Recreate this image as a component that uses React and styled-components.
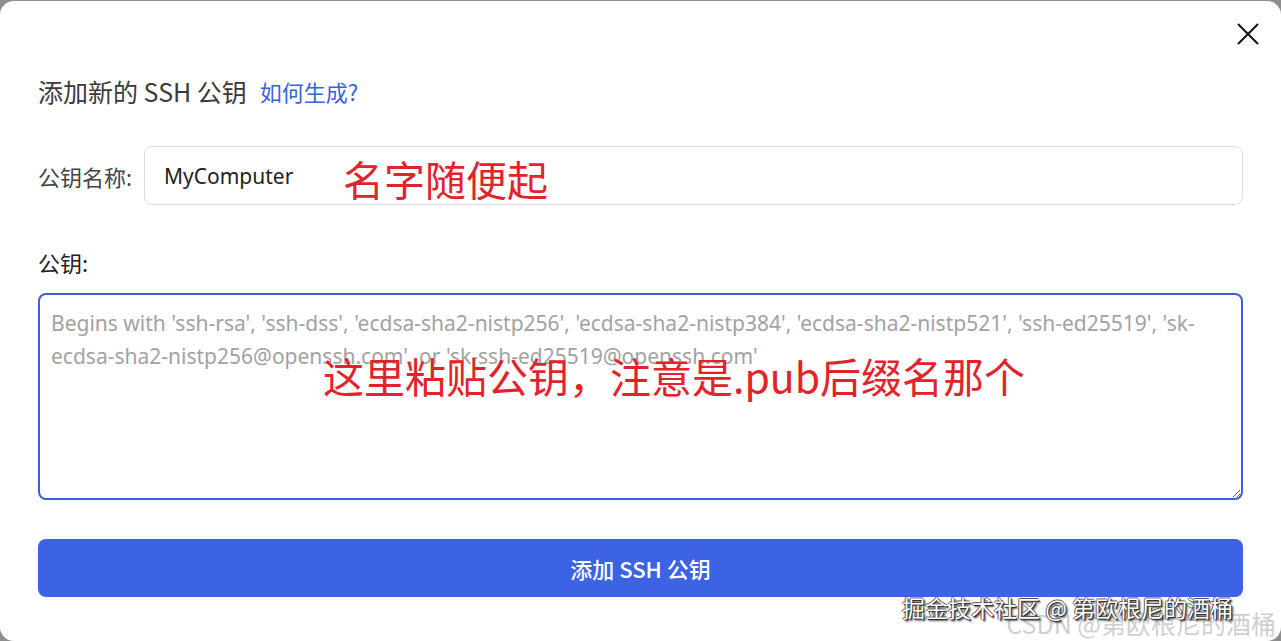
import React from "react";
import styled, { createGlobalStyle } from "styled-components";

const Global = createGlobalStyle`
  html, body { margin: 0; padding: 0; }
  body {
    background: #8e8e8e;
    overflow: hidden;
    font-family: "Noto Sans", "Noto Sans CJK SC", sans-serif;
  }
`;

const Modal = styled.div`
  position: relative;
  box-sizing: border-box;
  margin-top: 1px;
  height: 640px;
  background: #ffffff;
  border-radius: 14px;
  padding: 0 38px;
  display: flex;
  flex-direction: column;
`;

const CloseRow = styled.div`
  height: 64px;
  padding-top: 2px;
  box-sizing: border-box;
  display: flex;
  justify-content: flex-end;
  align-items: center;
  margin-right: -16px;
`;

const CloseButton = styled.button`
  width: 22px;
  height: 22px;
  padding: 0;
  border: none;
  background: none;
  display: flex;
  align-items: center;
  justify-content: center;
  cursor: pointer;
`;

const TitleRow = styled.div`
  height: 52px;
  display: flex;
  align-items: center;
  gap: 13px;
`;

const Title = styled.h2`
  margin: 0;
  font-family: "Noto Sans CJK SC", sans-serif;
  font-size: 25px;
  font-weight: 400;
  color: #3a3a3a;
`;

const HelpLink = styled.a`
  font-family: "Noto Sans CJK SC", sans-serif;
  font-size: 22px;
  color: #3a63d8;
  text-decoration: none;
`;

const NameRow = styled.div`
  margin-top: 29px;
  display: flex;
  align-items: center;
`;

const Label = styled.label`
  font-family: "Noto Sans CJK SC", sans-serif;
  font-size: 22px;
  color: ${p => p.$color || "#3a3a3a"};
  line-height: 30px;
  flex: ${p => (p.$width ? `0 0 ${p.$width}px` : "none")};
`;

const FieldWrap = styled.div`
  position: relative;
  flex: 1;
  display: flex;
`;

const TextInput = styled.input`
  flex: 1;
  box-sizing: border-box;
  height: 59px;
  border: 1px solid #dcdcdc;
  border-radius: 8px;
  padding: 0 19px;
  font-family: "Noto Sans", sans-serif;
  font-size: 21px;
  color: #222;
  outline: none;
`;

const KeyLabelRow = styled.div`
  margin-top: 42px;
`;

const KeyArea = styled.textarea`
  display: block;
  width: 100%;
  box-sizing: border-box;
  height: 207px;
  border: 2px solid #3d5fd9;
  border-radius: 8px;
  padding: 12px 11px;
  font-family: "Noto Sans", sans-serif;
  font-size: 21px;
  line-height: 33px;
  color: #222;
  outline: none;
  resize: vertical;
  &::placeholder { color: #a2a2a2; }
`;

const AreaWrap = styled.div`
  position: relative;
  margin-top: 16px;
`;

const Note = styled.span`
  position: absolute;
  left: ${p => p.$left}px;
  top: ${p => p.$top}px;
  font-family: "Noto Sans CJK SC", sans-serif;
  font-size: 41px;
  line-height: 42px;
  color: #e3232b;
  white-space: nowrap;
  pointer-events: none;
`;

const SubmitButton = styled.button`
  margin-top: 39px;
  height: 58px;
  border: none;
  border-radius: 8px;
  background: #3b63e4;
  color: #fff;
  font-family: "Noto Sans CJK SC", sans-serif;
  font-size: 22px;
  font-weight: 500;
  cursor: pointer;
`;

const WatermarkMain = styled.div`
  position: absolute;
  left: 902px;
  top: 591px;
  font-family: "Noto Sans CJK SC", sans-serif;
  font-size: 23px;
  line-height: 30px;
  color: #fff;
  text-shadow: 1px 1px 0 #333, -1px 0 0 #555, 0 -1px 0 #555, 2px 2px 2px #444;
  white-space: nowrap;
  z-index: 1;
`;

const WatermarkSub = styled.div`
  position: absolute;
  right: 5px;
  top: 606px;
  font-family: "Noto Sans CJK SC", sans-serif;
  font-size: 25px;
  line-height: 32px;
  color: rgba(160, 160, 160, 0.5);
  white-space: nowrap;
`;

const placeholder =
  "Begins with 'ssh-rsa', 'ssh-dss', 'ecdsa-sha2-nistp256', 'ecdsa-sha2-nistp384', 'ecdsa-sha2-nistp521', 'ssh-ed25519', 'sk-ecdsa-sha2-nistp256@openssh.com', or 'sk-ssh-ed25519@openssh.com'";

export default function App() {
  return (
    <>
      <Global />
      <Modal>
        <CloseRow>
          <CloseButton aria-label="close">
            <svg width="22" height="22" viewBox="0 0 22 22">
              <path d="M1.5 1.5 L20.5 20.5 M20.5 1.5 L1.5 20.5" stroke="#111" strokeWidth="2" strokeLinecap="round" />
            </svg>
          </CloseButton>
        </CloseRow>
        <TitleRow>
          <Title>添加新的 SSH 公钥</Title>
          <HelpLink href="#">如何生成?</HelpLink>
        </TitleRow>
        <NameRow>
          <Label $width={106} $color="#444">公钥名称:</Label>
          <FieldWrap>
            <TextInput defaultValue="MyComputer" />
            <Note $left={199} $top={11}>名字随便起</Note>
          </FieldWrap>
        </NameRow>
        <KeyLabelRow>
          <Label $color="#222">公钥:</Label>
        </KeyLabelRow>
        <AreaWrap>
          <KeyArea placeholder={placeholder} />
          <Note $left={285} $top={61}>这里粘贴公钥，注意是.pub后缀名那个</Note>
        </AreaWrap>
        <SubmitButton>添加 SSH 公钥</SubmitButton>
        <WatermarkSub>CSDN @第欧根尼的酒桶</WatermarkSub>
        <WatermarkMain>掘金技术社区 @ 第欧根尼的酒桶</WatermarkMain>
      </Modal>
    </>
  );
}
